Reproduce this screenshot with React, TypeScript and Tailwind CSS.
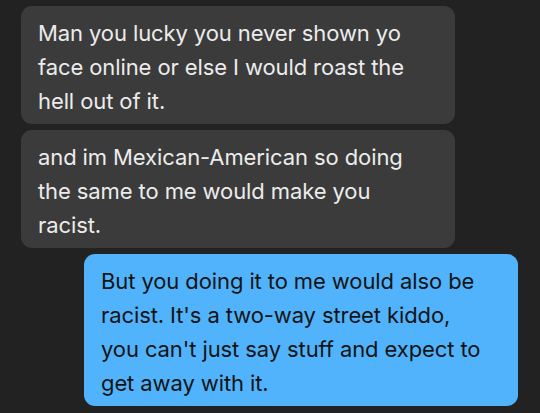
const Bubble = ({ lines, mine = false }: { lines: string[]; mine?: boolean }) => (
  <div
    className={`rounded-[11px] px-[17px] pt-[10px] pb-[6px] text-[22px] leading-[34px] ${
      mine ? 'ml-[84px] w-[434px] bg-[#51b3fb] text-[#141414]' : 'ml-[21px] w-[434px] bg-[#3b3b3b] text-[#ececec]'
    }`}
  >
    {lines.map((l, i) => (
      <div key={i} className="whitespace-nowrap tracking-[-0.1px]">
        {l}
      </div>
    ))}
  </div>
)

export default function App() {
  return (
    <div
      className="flex h-[413px] w-[540px] flex-col gap-[6px] bg-[#222222] pt-[6px]"
      style={{ fontFamily: 'Inter, "Noto Sans", sans-serif' }}
    >
      <Bubble
        lines={['Man you lucky you never shown yo', 'face online or else I would roast the', 'hell out of it.']}
      />
      <Bubble
        lines={['and im Mexican-American so doing', 'the same to me would make you', 'racist.']}
      />
      <Bubble
        mine
        lines={[
          'But you doing it to me would also be',
          "racist. It's a two-way street kiddo,",
          "you can't just say stuff and expect to",
          'get away with it.',
        ]}
      />
    </div>
  )
}
